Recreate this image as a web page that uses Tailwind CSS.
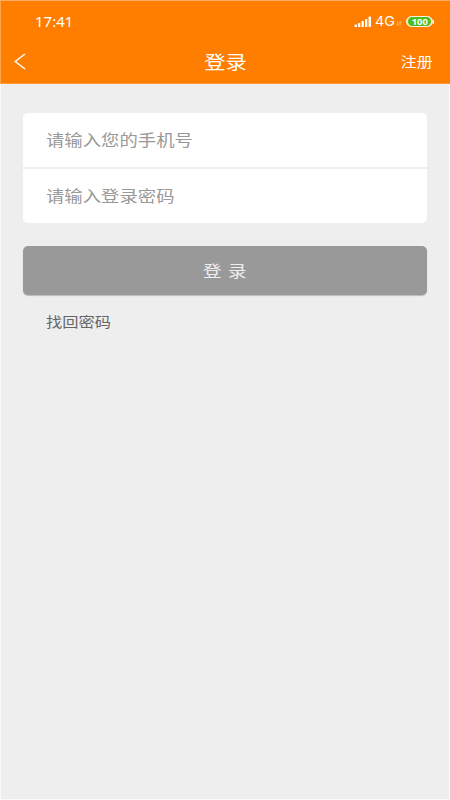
<!DOCTYPE html>
<html lang="zh-CN">
<head>
<meta charset="utf-8">
<meta name="viewport" content="width=device-width, initial-scale=1">
<title>登录</title>
<script src="https://cdn.jsdelivr.net/npm/@tailwindcss/browser@4"></script>
</head>
<body class="h-[800px] w-[450px] overflow-hidden bg-[#eeeeee] font-['Noto_Sans_CJK_SC',sans-serif]">
<div class="flex h-[800px] w-[450px] flex-col">
  <header class="h-[84px] border-t border-b border-l border-l-[#ffa64d] border-t-[#ffb066] border-b-[#ff9a3c] bg-[#ff7e00] text-white">
    <div class="flex h-[38px] items-center justify-between pt-[3px] pr-[16px] pl-[34px]">
      <span class="origin-left scale-x-[1.06] font-['Noto_Sans',sans-serif] text-[14px] leading-none tracking-[0.1px]">17:41</span>
      <div class="flex items-center">
        <svg class="mr-[3px] h-[11px] w-[18px]" viewBox="0 0 18 11" fill="#fff"><rect x="0.5" y="8.5" width="2.5" height="2.5" rx=".5"/><rect x="4" y="7" width="2.3" height="4" rx=".5"/><rect x="7.5" y="5" width="2.3" height="6" rx=".5"/><rect x="11" y="3" width="2.3" height="8" rx=".5"/><rect x="14.6" y="0.5" width="2.4" height="10.5" rx=".5"/></svg>
        <span class="w-[21px] font-['Inter',sans-serif] text-[13.5px] leading-none"><span class="inline-block origin-left scale-x-[1.06]">4G</span></span>
        <svg class="mt-[3px] mr-[4px] h-[5px] w-[6px]" viewBox="0 0 6 5" fill="none" stroke="#ffc48a" stroke-width=".8"><path d="M1.8.5v4L.5 3.3M4 4.5v-4l1.4 1.2"/></svg>
        <div class="flex h-[11px] w-[27px] items-center justify-center rounded-full border border-[#fff0e0] bg-[#ffe2c0]">
          <span class="flex h-[9px] w-[23px] items-center justify-center rounded-full bg-[#4bc01c] font-['Noto_Sans',sans-serif] text-[9px] leading-none font-bold"><span class="scale-x-[1.04]">100</span></span>
        </div>
        <div class="h-[4px] w-[1px] rounded-r bg-white"></div>
      </div>
    </div>
    <div class="grid h-[44px] grid-cols-3 items-center pr-[17px] pl-[13px]">
      <svg class="h-[17px] w-[12px]" viewBox="0 0 12 17" fill="none" stroke="#fff" stroke-width="1.5"><path d="M11 1 1.2 8.5 11 16"/></svg>
      <h1 class="scale-x-[1.18] pl-[3px] text-center text-[18px] leading-none font-normal">登录</h1>
      <a class="origin-right scale-x-[1.14] text-right text-[14px] leading-none">注册</a>
    </div>
  </header>
  <main class="flex grow flex-col border-r border-b border-l border-[#fafafa] px-[22px] pt-[29px]">
    <form class="flex flex-col">
      <div class="flex flex-col gap-[2px]">
        <label class="flex h-[54px] items-center rounded-t-[5px] bg-white pl-[23px] text-[#999999]"><span class="origin-left scale-x-[1.17] text-[15.7px] leading-none">请输入您的手机号</span></label>
        <label class="flex h-[54px] items-center rounded-b-[5px] bg-white pl-[23px] text-[#999999]"><span class="origin-left scale-x-[1.17] text-[15.7px] leading-none">请输入登录密码</span></label>
      </div>
      <button type="button" class="mt-[23px] flex h-[49px] items-center justify-center rounded-[5px] bg-[#999999] pb-[2px] text-[#eeeeee] shadow-[0_1px_1px_#00000038]"><span class="scale-x-[1.16] text-[16px] leading-none [word-spacing:2px]">登 录</span></button>
    </form>
    <a class="mt-[19px] ml-[23px] origin-left scale-x-[1.16] self-start text-[14px] leading-none text-[#666666]">找回密码</a>
  </main>
</div>
</body>
</html>
